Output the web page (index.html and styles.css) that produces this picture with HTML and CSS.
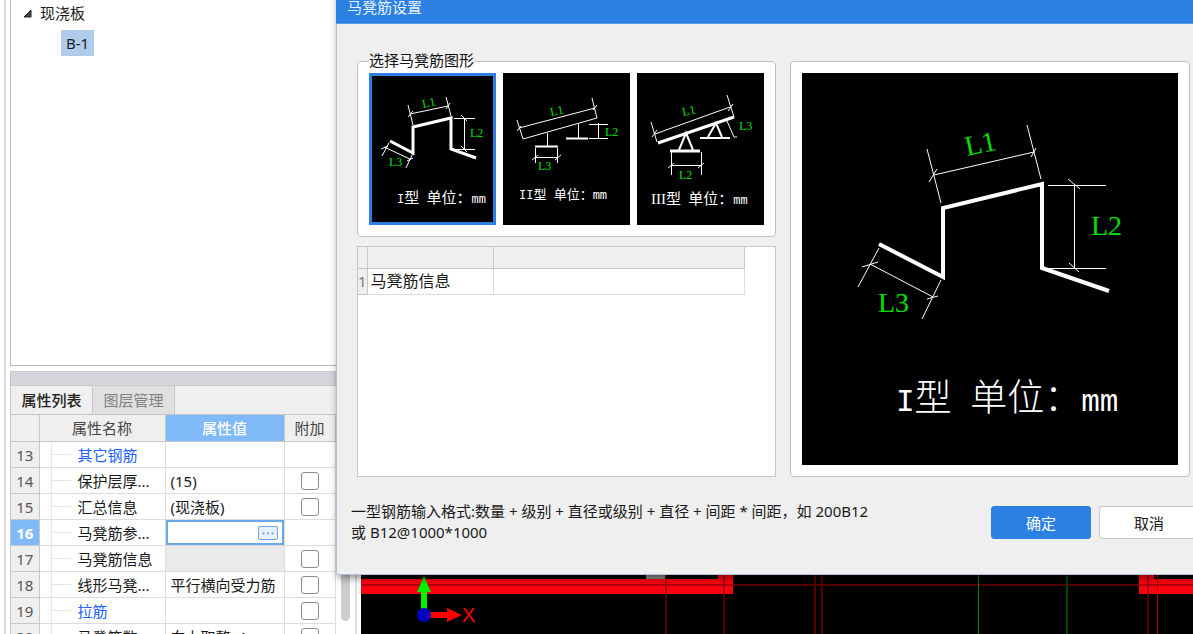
FILE: index.html
```html
<!DOCTYPE html>
<html lang="zh-CN">
<head>
<meta charset="utf-8">
<title>马凳筋设置</title>
<link rel="stylesheet" href="styles.css">
</head>
<body>
<div class="app">
  <div class="edge"></div>
  <aside class="sidebar">
    <div class="tree">
      <div class="tree-parent"><svg class="caret" viewBox="0 0 9 9"><path d="M8 1V8H1Z" fill="#444" stroke="#222"/></svg>现浇板</div>
      <div class="tree-child">B-1</div>
    </div>
    <section class="props">
      <div class="splitter"></div>
      <div class="tabs">
        <button class="tab tab-on">属性列表</button>
        <button class="tab">图层管理</button>
      </div>
      <table class="prop-table">
        <colgroup><col class="c-num"><col class="c-name"><col class="c-value"><col class="c-add"></colgroup>
        <thead><tr><th></th><th>属性名称</th><th class="th-on">属性值</th><th>附加</th></tr></thead>
        <tbody>
          <tr><td class="num">13</td><td class="name group">其它钢筋</td><td></td><td></td></tr>
          <tr><td class="num">14</td><td class="name">保护层厚...</td><td>(15)</td><td class="add"><input type="checkbox" aria-label="附加 保护层厚"></td></tr>
          <tr><td class="num">15</td><td class="name">汇总信息</td><td>(现浇板)</td><td class="add"><input type="checkbox" aria-label="附加 汇总信息"></td></tr>
          <tr><td class="num num-on">16</td><td class="name">马凳筋参...</td><td class="editing"><div class="editor"><input class="editor-text" type="text" aria-label="马凳筋参数"><button class="more" aria-label="更多"><svg viewBox="0 0 20 14"><path d="M4 6h2v2H4zM9 6h2v2H9zM14 6h2v2h-2z" fill="#5a9ade"/></svg></button></div></td><td></td></tr>
          <tr><td class="num">17</td><td class="name">马凳筋信息</td><td class="disabled"></td><td class="add"><input type="checkbox" aria-label="附加 马凳筋信息"></td></tr>
          <tr><td class="num">18</td><td class="name">线形马凳...</td><td>平行横向受力筋</td><td class="add"><input type="checkbox" aria-label="附加 线形马凳"></td></tr>
          <tr><td class="num">19</td><td class="name group">拉筋</td><td></td><td class="add"><input type="checkbox" aria-label="附加 拉筋"></td></tr>
          <tr><td class="num">20</td><td class="name">马凳筋数...</td><td>向上取整+1</td><td class="add"><input type="checkbox" aria-label="附加 马凳筋数"></td></tr>
        </tbody>
      </table>
    </section>
  </aside>
  <div class="gutter"><div class="scroll-thumb"></div></div>
  <main class="canvas">
    <svg class="plan" viewBox="0 0 833 60" preserveAspectRatio="xMinYMax slice">
      <g fill="#ff0010"><path d="M0 5H357V0H372V20H0Z"/><path d="M778 0H793V5H833V20H778Z"/></g>
      <path d="M285 0H305V5H285Z" fill="#888"/>
      <path d="M0 11H372M778 11H833" stroke="#b0000c" stroke-width="2"/>
      <path d="M372 11H778M305 0V60M363 0V60M454 0V60M461 0V60M787 0V60" stroke="#550000" stroke-width="2" fill="none"/>
      <path d="M305 5V20M363 0V20M787 0V20" stroke="#a0000a" stroke-width="2"/>
      <path d="M796.5 0V60" stroke="#b80000"/>
      <path d="M617.5 0V60" stroke="#008a00"/>
      <path d="M706 0V60" stroke="#004400" stroke-width="2"/>
      <path d="M60 36V18H56L63 2L70 18H66V36Z" fill="#00f000"/>
      <path d="M69 38H86V34L101 41L86 48V44H69Z" fill="#f00"/>
      <circle cx="63" cy="41" r="7" fill="#0000c0"/>
      <text class="axis" x="101" y="48">X</text>
    </svg>
  </main>

  <div class="dialog" role="dialog" aria-label="马凳筋设置">
    <header class="titlebar">马凳筋设置</header>
    <div class="dialog-body">
      <div class="left">
        <fieldset class="shapes">
          <legend>选择马凳筋图形</legend>
          <div class="thumbs">
            <button class="thumb thumb-on" aria-label="I型">
              <svg viewBox="0 0 127 152">
                <g class="thin"><path d="M39 32L44 52M77 24L82 43M41 41L79 33M39 44L44 38M77 36L81 30M85 45.500H106M85 76.500H106M95.500 45V76M92 42L98 48M92 73L98 79M20 70L13 83M44 80L37 95M15 74L41 86M12 76L19 73M38 88L44 85"/></g>
                <path class="bar" d="M21 68L44 80V54L82 45V76L107 85"/>
                <g class="dim"><text x="54" y="35" transform="rotate(-12 54 35)">L1</text><text x="101" y="64">L2</text><text x="20" y="93">L3</text></g>
                <text class="cap" x="28" y="130"><tspan class="mono">I</tspan>型<tspan class="mono"> </tspan>单位：<tspan class="mono">mm</tspan></text>
              </svg>
            </button>
            <button class="thumb" aria-label="II型">
              <svg viewBox="0 0 127 152">
                <g class="thin"><path d="M14 47L20 66M89 25L94 45M16 55L92 35M20 66L94 45M14 58L18 53M90 37L94 32M44.500 60V73M32.500 75V90M54.500 75V90M32 84.500H55M29 87L35 82M52 87L58 82M75.500 51V65M86 51.500H105M86 65.500H105M95.500 50V66"/></g>
                <path class="mid" d="M32 73.500H55M63 65.500H85"/>
                <g class="dim"><text x="48" y="43" transform="rotate(-12 48 43)">L1</text><text x="102" y="63">L2</text><text x="35" y="97">L3</text></g>
                <text class="cap cap-small" x="16" y="126"><tspan class="mono">II</tspan>型<tspan class="mono"> </tspan>单位：<tspan class="mono">mm</tspan></text>
              </svg>
            </button>
            <button class="thumb" aria-label="III型">
              <svg viewBox="0 0 127 152">
                <g class="thin"><path d="M14 49L20 69M90 22L97 44M18 61L93 34M15 64L20 57M91 38L96 31M34.500 79V102M64.500 79V102M34 92.500H65M31 95L37 90M61 95L67 90M90 48L97 64H100"/></g>
                <path class="mid" d="M42 77L49 60L56 77M71 64L79 50L85 64M63 65H93"/>
                <path class="bar" d="M21 70L97 44M33 78H63"/>
                <g class="dim"><text x="46" y="43" transform="rotate(-12 46 43)">L1</text><text x="42" y="106">L2</text><text x="102" y="57">L3</text></g>
                <text class="cap" x="14" y="131"><tspan class="serif">III</tspan>型<tspan class="mono"> </tspan>单位：<tspan class="mono">mm</tspan></text>
              </svg>
            </button>
          </div>
        </fieldset>
        <div class="info">
          <table class="info-table">
            <colgroup><col class="i-num"><col class="i-name"><col class="i-value"></colgroup>
            <thead><tr><th></th><th></th><th></th></tr></thead>
            <tbody><tr><td class="i-index">1</td><td>马凳筋信息</td><td></td></tr></tbody>
          </table>
        </div>
      </div>
      <div class="preview">
        <svg viewBox="0 0 376 392">
          <g class="thin"><path d="M125 76L139 130M225 52L239 106M132 102L232 79M135 96L127 109M234 75L229 84M246 112.500H304M242 195.500H304M272.500 112V195M266 106L278 116M267 190L277 199M77 175L56 214M139 207L120 246M68 191L131 224M60 194L76 189M125 226L136 223"/></g>
          <path class="bar bar-big" d="M77 171L141 204V135L240 111V195L307 218"/>
          <g class="dim dim-big"><text x="165" y="83" transform="rotate(-12 165 83)">L1</text><text x="289" y="162">L2</text><text x="76" y="239">L3</text></g>
          <text class="cap cap-big" x="94" y="338"><tspan class="mono">I</tspan>型<tspan class="mono"> </tspan>单位：<tspan class="mono">mm</tspan></text>
        </svg>
      </div>
    </div>
    <footer class="dialog-foot">
      <p class="hint">一型钢筋输入格式:数量 + 级别 + 直径或级别 + 直径 + 间距 * 间距，如 200B12<br>或 B12@1000*1000</p>
      <button class="btn btn-main">确定</button>
      <button class="btn">取消</button>
    </footer>
  </div>
</div>
</body>
</html>
```

FILE: styles.css
```css
* { box-sizing: border-box; }

body {
  margin: 0;
  font: 15px/20px "Noto Sans", "Noto Sans CJK SC", sans-serif;
  color: #1a1a1a;
  background: #fff;
}

button, input { font: inherit; color: inherit; margin: 0; }
svg { display: block; }

.app {
  position: relative;
  display: flex;
  height: 100vh;
  overflow: hidden;
}

.edge {
  flex: 0 0 6px;
  margin-right: 4px;
  border-right: 2px solid #d8dade;
}

/* Component tree and property list */
.sidebar {
  flex: 0 0 325px;
  display: flex;
  flex-direction: column;
}

.tree {
  flex: 1;
  padding: 3px 0 0 12px;
  border-left: 1px solid #b5b8bc;
  border-bottom: 1px solid #b5b8bc;
  margin-bottom: 5px;
}

.tree-parent { display: flex; align-items: center; gap: 8px; }
.caret { width: 9px; height: 9px; }

.tree-child {
  width: max-content;
  margin: 7px 0 0 38px;
  padding: 3px 5px;
  background: #b1cbed;
}

.props {
  flex: 0 0 263px;
  overflow: hidden;
  background: #efefef;
  border-left: 1px solid #c4c6ca;
}

.splitter { height: 15px; background: #d4d6dc; border: 1px solid #c8cad0; border-left: 0; }

.tabs { display: flex; height: 28px; }

.tab {
  width: 82px;
  padding: 0;
  border: 0;
  border-right: 1px solid #c4c6ca;
  background: #e0e0e0;
  color: #808080;
}

.tab-on { background: #efefef; color: #222; font-weight: 500; }

.prop-table, .info-table { border-collapse: collapse; table-layout: fixed; }
.prop-table { width: 324px; background: #fff; }
.c-num { width: 28px; }
.c-name { width: 126px; }
.c-value { width: 119px; }
.c-add { width: 51px; }

.prop-table th {
  height: 27px;
  padding: 0;
  border: 1px solid #c4c6ca;
  border-left: 0;
  background: #efefef;
  font-weight: 400;
  color: #444;
}

.prop-table .th-on { background: #7fb9f8; color: #fff; font-weight: 500; }

.prop-table td {
  height: 26px;
  padding: 0 0 0 5px;
  border: 1px solid #dcdcdc;
  border-left: 0;
  white-space: nowrap;
  line-height: 18px;
}

.prop-table .num { padding: 0; text-align: center; background: #efefef; color: #555; border-color: #c8c8c8; }
.prop-table .num-on { background: #7fb9f8; color: #fff; font-weight: 700; }

.prop-table .name {
  padding-left: 38px;
  background: linear-gradient(#e6e6e6, #e6e6e6) 11px 50% / 20px 1px no-repeat,
              linear-gradient(#e6e6e6, #e6e6e6) 11px 0 / 1px 100% no-repeat;
}

.prop-table .group { color: #2060ff; }
.prop-table .disabled { background: #eaeaea; }
.prop-table .add { padding: 0; text-align: center; }

.add input {
  appearance: none;
  display: block;
  width: 18px;
  height: 18px;
  margin: 0 auto;
  border: 1px solid #8c8c8c;
  border-radius: 3px;
  background: #fff;
}

.prop-table .editing { padding: 0; }
.editor { display: flex; align-items: center; height: 25px; padding-right: 4px; border: 2px solid #6ba8e8; }
.editor-text { flex: 1; min-width: 0; height: 20px; padding: 0 4px; border: 0; outline: 0; background: none; }
.more { width: 20px; height: 14px; padding: 0; border: 1px solid #6ba8e8; border-radius: 2px; background: #e8f1fb; }

.gutter {
  flex: 0 0 21px;
  margin-right: 4px;
  padding: 0 5px 13px;
  border-right: 2px solid #dcdee2;
}

.scroll-thumb { height: 100%; border-radius: 5px; background: #cdcdcd; }

.canvas { flex: 1; min-width: 0; display: flex; align-items: flex-end; background: #000; }
.plan { width: 100%; height: 60px; }
.axis { font: 20px "Liberation Sans", sans-serif; fill: #f00; }

/* Dialog window floating over the drawing area */
.dialog {
  position: absolute;
  left: 336px;
  top: -10px;
  right: -16px;
  border: 1px solid #b4c0d4;
  border-top: 0;
  background: #efefef;
  box-shadow: 2px 3px 8px rgba(0, 0, 0, 0.45);
}

.titlebar {
  height: 34px;
  padding: 0 11px;
  margin-left: -1px;
  line-height: 34px;
  color: #e8f2ff;
  background: #2b80e2;
  border-bottom: 1px solid #5a9fee;
}

.dialog-body {
  display: grid;
  grid-template-columns: 419fr 400fr;
  gap: 14px;
  padding: 37px 18px 0 20px;
}

.left { display: flex; flex-direction: column; gap: 9px; min-width: 0; }

.shapes {
  min-width: 0;
  margin: -9px 0 0;
  padding: 2px 11px 11px;
  border: 1px solid #c0c0c0;
  border-radius: 4px;
  background: #fff;
}

.shapes legend { padding: 0 0 3px; line-height: 16px; color: #111; }
.thumbs { display: grid; grid-template-columns: repeat(3, 1fr); gap: 7px; }
.thumb { position: relative; padding: 0; border: 0; background: #000; }
.thumb svg { width: 100%; }

.thumb-on::after {
  content: "";
  position: absolute;
  inset: 0;
  border: 3px solid #2b80e2;
}

.thin { fill: none; stroke: #fff; stroke-width: 1; }
.mid { fill: none; stroke: #fff; stroke-width: 2; }
.bar { fill: none; stroke: #fff; stroke-width: 3; }
.bar-big { stroke-width: 4; }
.dim { font: 12px "Liberation Serif", serif; fill: #00e000; }
.dim-big { font-size: 28px; }
.cap { font: 15px "Noto Sans CJK SC", sans-serif; fill: #fff; white-space: pre; }
.mono { font-family: "Liberation Mono", monospace; font-size: 12px; }
.serif { font-family: "Liberation Serif", serif; font-size: 15px; }
.cap-small { font-size: 13px; }
.cap-big { font-size: 37px; font-weight: 300; }
.cap-big .mono { font-size: 31px; }

.info { flex: 1; border: 1px solid #c4c8c8; background: #fff; }
.i-num { width: 9px; }
.i-name { width: 126px; }
.i-value { width: 251px; }
.info-table { width: 386px; font-size: 16px; }
.info-table th { height: 21px; padding: 0; background: #efefef; border: 1px solid #c8c8c8; border-width: 0 1px 1px 0; }
.info-table td { height: 26px; padding: 0 0 0 3px; border: 1px solid #dcdcdc; border-width: 0 1px 1px 0; }
.info-table .i-index { padding: 0; background: #efefef; color: #777; font-size: 15px; border-color: #c8c8c8; }

.preview { padding: 11px; border: 1px solid #c0c0c0; border-radius: 4px; background: #fff; }
.preview svg { width: 100%; background: #000; }

.dialog-foot {
  display: flex;
  align-items: flex-start;
  gap: 8px;
  padding: 29px 9px 31px 14px;
}

.hint { flex: 1; margin: -5px 0 0; line-height: 21px; white-space: nowrap; }

.btn {
  flex: 0 0 100px;
  height: 33px;
  padding: 0;
  border: 1px solid #c8c8c8;
  border-radius: 3px;
  background: #fff;
}

.btn-main { border-color: #2b80e2; background: #2b80e2; color: #fff; }
```
